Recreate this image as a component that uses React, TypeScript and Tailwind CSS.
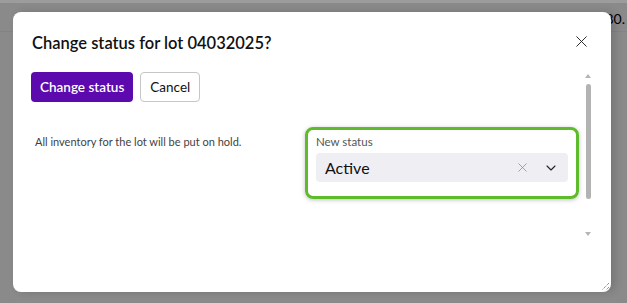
import { X, ChevronDown } from 'lucide-react';

const font = { fontFamily: '"Segoe UI", Lato, "Noto Sans", sans-serif' };

export default function App() {
  return (
    <div className="relative h-[303px] w-[627px] overflow-hidden bg-[#8a8a8a]" style={font}>
      {/* page behind the modal */}
      <div className="h-[3px] bg-[#9c9c9c]" />
      <div className="flex h-[29px] justify-end border-b border-[#838383] pr-[2px] pt-[9px] text-[14px] leading-none text-black">
        <span>80.</span>
      </div>

      {/* Modal */}
      <div className="absolute left-[13px] top-[12px] flex h-[280px] w-[598px] flex-col rounded-[8px] bg-white shadow-[4px_0_8px_rgba(0,0,0,0.15)]">
        <div className="flex items-start justify-between pl-[19px] pr-[20px] pt-[19px]">
          <h2 className="text-[16.5px] font-semibold text-[#111]">Change status for lot 04032025?</h2>
          <button className="mt-[1px] text-[#222]">
            <X size={19} strokeWidth={1.2} />
          </button>
        </div>

        <div className="flex flex-1 gap-[6px] pr-[20px]">
          <div className="flex flex-1 flex-col">
            <div className="mt-[16px] flex gap-[7px] pl-[18px]">
              <button className="h-[30px] rounded-[4px] bg-[#5c0aae] px-[9px] text-[13.5px] font-semibold text-white">
                Change status
              </button>
              <button className="h-[30px] rounded-[4px] border border-[#c6c6c6] bg-white px-[9px] text-[13.5px] text-[#111]">
                Cancel
              </button>
            </div>

            <div className="mt-[25px] flex items-start">
              <p className="ml-[22px] mt-[7px] flex-1 text-[11px] text-[#3f3f3f]">
                All inventory for the lot will be put on hold.
              </p>
              <div className="w-[274px] rounded-[8px] border-[3px] border-[#5dbb2c] px-[8px] pb-[14px] pt-[3px] shadow-[0_1px_4px_rgba(0,0,0,0.25)]">
                <div className="text-[11.5px] text-[#555]">New status</div>
                <div className="mt-[3px] flex h-[29px] items-center rounded-[4px] bg-[#efeff3] pl-[9px] pr-[9px]">
                  <span className="flex-1 text-[16px] text-[#111]">Active</span>
                  <X size={15} strokeWidth={1.2} className="mr-[13px] text-[#888]" />
                  <ChevronDown size={16} strokeWidth={1.6} className="text-[#222]" />
                </div>
              </div>
            </div>
          </div>

          {/* scrollbar */}
          <div className="mt-[18px] flex w-[6px] flex-col items-center">
            <div className="h-0 w-0 border-x-[3px] border-b-[4px] border-x-transparent border-b-[#b5b5b5]" />
            <div className="mt-[6px] h-[115px] w-[5px] rounded-full bg-[#b3b3b3]" />
            <div className="mt-[33px] h-0 w-0 border-x-[3px] border-t-[4px] border-x-transparent border-t-[#b5b5b5]" />
          </div>
        </div>

        {/* resize grip */}
        <svg className="absolute bottom-[1px] right-[1px]" width="9" height="9" viewBox="0 0 9 9">
          <path d="M8 1L1 8M8 5L5 8" stroke="#666" strokeWidth="1" strokeDasharray="1 1" />
        </svg>
      </div>
    </div>
  );
}
